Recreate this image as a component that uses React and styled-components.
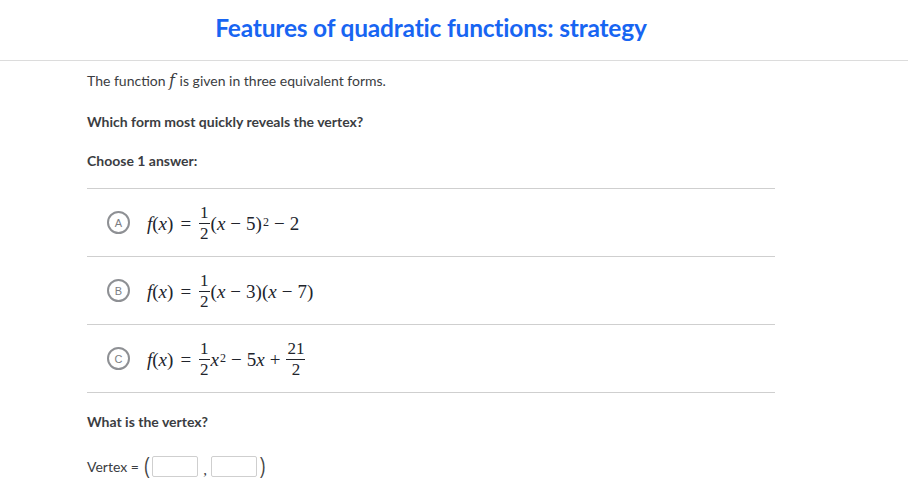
import React from "react";
import styled, { createGlobalStyle } from "styled-components";

const GlobalStyle = createGlobalStyle`
  body {
    margin: 0;
    background: #fff;
    font-family: Lato, "Liberation Sans", sans-serif;
    color: #21242c;
  }
`;

const Header = styled.div`
  height: 60px;
  border-bottom: 1px solid #dcdcdc;
  display: flex;
  align-items: center;
  justify-content: center;
  padding-right: 46px;
`;

const Title = styled.h1`
  margin: 0 0 5px 0;
  font-size: 24.5px;
  font-weight: 700;
  color: #1865f2;
  letter-spacing: -0.2px;
`;

const Content = styled.div`
  padding: 10px 0 0 87px;
  width: 688px;
`;

const Para = styled.p`
  margin: 0;
  font-size: 14px;
  line-height: 20px;
  font-weight: ${(p) => (p.bold ? 700 : 400)};
  color: #3b3d42;
  margin-bottom: ${(p) => p.gap || 0}px;
`;

const MathI = styled.span`
  font-family: "DejaVu Serif", "Liberation Serif", serif;
  font-style: italic;
  font-size: 16px;
  margin-right: 1px;
`;

const ChoiceList = styled.div`
  margin-top: 17px;
  border-top: 1px solid #cfcfcf;
`;

const Choice = styled.div`
  height: 67px;
  border-bottom: 1px solid #cfcfcf;
  display: flex;
  align-items: center;
  padding-left: 20px;
`;

const Bubble = styled.div`
  box-sizing: border-box;
  width: 23px;
  height: 23px;
  border: 2px solid #8e9094;
  border-radius: 50%;
  display: flex;
  align-items: center;
  justify-content: center;
  font-size: 11px;
  color: #7b7d82;
  font-family: "Liberation Sans", sans-serif;
  margin-right: 17px;
  flex-shrink: 0;
`;

const Formula = styled.div`
  font-family: "Liberation Serif", "DejaVu Serif", serif;
  font-size: 19px;
  color: #21242c;
  display: flex;
  align-items: center;
  white-space: pre;
  margin-top: 2px;
`;

const Var = styled.span`
  font-style: italic;
`;

const Op = styled.span`
  margin: 0 ${(p) => p.space || 5}px;
`;

const Frac = styled.span`
  display: inline-flex;
  flex-direction: column;
  align-items: center;
  margin: 0 1px;
  font-size: 17px;
`;

const Num = styled.span`
  padding: 0 1px;
  border-bottom: 1px solid #21242c;
  line-height: 20px;
`;

const Den = styled.span`
  line-height: 20px;
`;

const Sup = styled.span`
  font-size: 12px;
  align-self: flex-start;
  margin-top: 12px;
  margin-left: 1px;
`;

const Question = styled(Para)`
  margin-top: 19px;
`;

const VertexRow = styled.div`
  margin-top: 21px;
  display: flex;
  align-items: center;
  font-size: 14px;
  color: #3b3d42;
`;

const Paren = styled.span`
  font-family: "Liberation Sans", sans-serif;
  font-size: 22px;
  font-weight: 400;
  color: #444;
  margin: 0 ${(p) => p.right || 2}px 0 ${(p) => p.left || 2}px;
  transform: scaleX(0.75);
`;

const Box = styled.div`
  box-sizing: border-box;
  width: 46px;
  height: 21px;
  border: 1px solid #cfcfcf;
  border-radius: 2px;
  background: #fff;
`;

const Comma = styled.span`
  font-family: "Liberation Serif", serif;
  font-size: 15px;
  margin: 8px 4px 0 5px;
`;

function Fx() {
  return (
    <>
      <Var>f</Var>(<Var>x</Var>)<Op space={7}>=</Op>
    </>
  );
}

function Half() {
  return (
    <Frac>
      <Num>1</Num>
      <Den>2</Den>
    </Frac>
  );
}

export default function App() {
  return (
    <>
      <GlobalStyle />
      <Header>
        <Title>Features of quadratic functions: strategy</Title>
      </Header>
      <Content>
        <Para gap={21}>
          The function <MathI>f</MathI> is given in three equivalent forms.
        </Para>
        <Para bold gap={19}>Which form most quickly reveals the vertex?</Para>
        <Para bold>Choose 1 answer:</Para>
        <ChoiceList>
          <Choice>
            <Bubble>A</Bubble>
            <Formula>
              <Fx />
              <Half />(<Var>x</Var>
              <Op>−</Op>5)<Sup>2</Sup>
              <Op>−</Op>2
            </Formula>
          </Choice>
          <Choice>
            <Bubble>B</Bubble>
            <Formula>
              <Fx />
              <Half />(<Var>x</Var>
              <Op>−</Op>3)(<Var>x</Var>
              <Op>−</Op>7)
            </Formula>
          </Choice>
          <Choice>
            <Bubble>C</Bubble>
            <Formula>
              <Fx />
              <Half />
              <Var>x</Var>
              <Sup>2</Sup>
              <Op>−</Op>5<Var>x</Var>
              <Op>+</Op>
              <Frac>
                <Num>21</Num>
                <Den>2</Den>
              </Frac>
            </Formula>
          </Choice>
        </ChoiceList>
        <Question bold>What is the vertex?</Question>
        <VertexRow>
          Vertex =<Paren left={4}>(</Paren>
          <Box />
          <Comma>,</Comma>
          <Box />
          <Paren>)</Paren>
        </VertexRow>
      </Content>
    </>
  );
}
